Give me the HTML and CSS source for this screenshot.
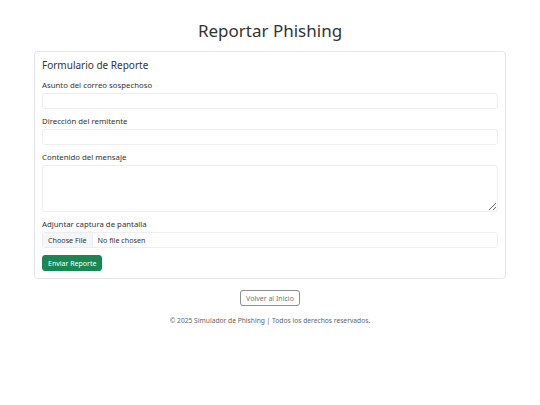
FILE: index.html
```html
<!DOCTYPE html>
<html lang="es">
<head>
    <meta charset="UTF-8">
    <meta name="viewport" content="width=device-width, initial-scale=1.0">
    <title>Reportar Phishing</title>
    <link rel="stylesheet" href="styles.css">
</head>
<body>
    <div class="container">
        <h1 class="page-title">Reportar Phishing</h1>

        <div class="card">
            <h4 class="card-title">Formulario de Reporte</h4>
            <form class="report-form">
                <div class="field">
                    <label for="asunto">Asunto del correo sospechoso</label>
                    <input type="text" id="asunto" class="form-control">
                </div>
                <div class="field">
                    <label for="remitente">Dirección del remitente</label>
                    <input type="email" id="remitente" class="form-control">
                </div>
                <div class="field">
                    <label for="contenido">Contenido del mensaje</label>
                    <textarea id="contenido" class="form-control textarea"></textarea>
                </div>
                <div class="field">
                    <label for="captura">Adjuntar captura de pantalla</label>
                    <input type="file" id="captura" class="form-control file">
                </div>
                <button type="submit" class="btn btn-success">Enviar Reporte</button>
            </form>
        </div>

        <div class="back">
            <a href="#" class="btn btn-outline">Volver al Inicio</a>
        </div>

        <footer class="footer">© 2025 Simulador de Phishing | Todos los derechos reservados.</footer>
    </div>
</body>
</html>
```

FILE: styles.css
```css
body {
    margin: 0;
    font-family: "Noto Sans", "Open Sans", sans-serif;
    color: #212529;
    background: #ffffff;
}

.container {
    width: 472px;
    margin: 0 auto;
    padding-top: 19px;
}

.page-title {
    margin: 0 0 8px;
    font-size: 17px;
    font-weight: 400;
    line-height: 24px;
    text-align: center;
    color: #333;
}

.card {
    border: 1px solid #e3e6ea;
    border-radius: 4px;
    padding: 7px 7px 7px;
}

.card-title {
    margin: 0 0 8px;
    font-size: 10px;
    font-weight: 400;
    line-height: 12px;
    color: #333;
}

.report-form {
    display: flex;
    flex-direction: column;
    align-items: flex-start;
}

.field {
    display: flex;
    flex-direction: column;
    gap: 2px;
    width: 100%;
    margin-bottom: 6px;
}

.field label {
    font-size: 7.8px;
    line-height: 12px;
    color: #333;
}

.form-control {
    box-sizing: border-box;
    width: 100%;
    height: 16px;
    margin: 0;
    padding: 0 6px;
    border: 1px solid #eceef1;
    border-radius: 3px;
    font-family: inherit;
    font-size: 7.5px;
    background: #fff;
}

.textarea {
    height: 47px;
    resize: vertical;
}

.file {
    padding: 0;
    font-size: 7.2px;
    color: #333;
}

.file::file-selector-button {
    height: 100%;
    margin: 0 5px 0 0;
    padding: 0 5px;
    border: none;
    border-right: 1px solid #eceef1;
    background: #f5f6f8;
    font-family: inherit;
    font-size: 7.2px;
    color: #333;
}

.btn {
    display: inline-flex;
    align-items: center;
    box-sizing: border-box;
    height: 16px;
    padding: 0 5px;
    border-radius: 3px;
    font-family: inherit;
    font-size: 7px;
    text-decoration: none;
    cursor: pointer;
}

.btn-success {
    margin-top: 1px;
    border: 1px solid #198754;
    background: #198754;
    color: #fff;
}

.btn-outline {
    border: 1px solid #8a9096;
    background: #fff;
    color: #6c757d;
}

.back {
    display: flex;
    justify-content: center;
    margin-top: 11px;
}

.footer {
    margin-top: 9px;
    font-size: 6.7px;
    line-height: 12px;
    text-align: center;
    color: #666;
}
```
